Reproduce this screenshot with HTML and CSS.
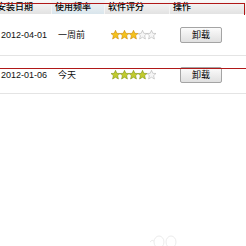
FILE: index.html
```html
<!DOCTYPE html>
<html lang="zh">
<head>
    <meta charset="UTF-8">
    <title>软件管理</title>
    <link rel="stylesheet" href="styles.css">
</head>
<body>
    <div class="page">
        <div class="soft-table">
            <div class="head-row">
                <div class="cell">安装日期</div>
                <div class="cell active">使用频率</div>
                <div class="cell">软件评分</div>
                <div class="cell">操作</div>
            </div>

            <div class="row row-first">
                <div class="cell">2012-04-01</div>
                <div class="cell">一周前</div>
                <div class="cell stars gold">
                    <svg viewBox="0 0 46 10" width="46" height="10">
                        <defs>
                            <polygon id="star" points="4.5,0.3 5.8,3.3 9,3.5 6.6,5.6 7.4,9 4.5,7.2 1.6,9 2.4,5.6 0,3.5 3.2,3.3"/>
                            <clipPath id="half"><rect x="27" y="0" width="4.5" height="10"/></clipPath>
                        </defs>
                        <use href="#star" x="0" class="on"/>
                        <use href="#star" x="9" class="on"/>
                        <use href="#star" x="18" class="on"/>
                        <use href="#star" x="27" class="off"/>
                        <use href="#star" x="27" class="on" clip-path="url(#half)"/>
                        <use href="#star" x="36" class="off"/>
                    </svg>
                </div>
                <div class="cell"><button class="btn">卸载</button></div>
            </div>

            <div class="row row-second">
                <div class="cell">2012-01-06</div>
                <div class="cell">今天</div>
                <div class="cell stars green">
                    <svg viewBox="0 0 46 10" width="46" height="10">
                        <defs>
                            <clipPath id="half2"><rect x="36" y="0" width="4.5" height="10"/></clipPath>
                        </defs>
                        <use href="#star" x="0" class="on"/>
                        <use href="#star" x="9" class="on"/>
                        <use href="#star" x="18" class="on"/>
                        <use href="#star" x="27" class="on"/>
                        <use href="#star" x="36" class="off"/>
                        <use href="#star" x="36" class="on" clip-path="url(#half2)"/>
                    </svg>
                </div>
                <div class="cell"><button class="btn">卸载</button></div>
            </div>
        </div>

        <div class="mark">
            <svg viewBox="0 0 34 14" width="34" height="14">
                <ellipse cx="11" cy="9" rx="5" ry="6"/>
                <ellipse cx="23" cy="9" rx="5" ry="6"/>
                <path d="M2 9 Q4 6 6 8"/>
            </svg>
        </div>

        <!-- red guide lines drawn over the table -->
        <div class="guide guide-top"></div>
        <div class="guide guide-side"></div>
        <div class="guide guide-mid"></div>
    </div>
</body>
</html>
```

FILE: styles.css
```css
*{
    margin:0;
    padding:0;
    box-sizing: border-box;
}
body{
    background:#fff;
    font-family: "Liberation Sans", "Noto Sans CJK SC", sans-serif;
    font-size: 9px;
    color:#111;
}
.page{
    position: relative;
    width:246px;
    height:246px;
    overflow: hidden;
}
.soft-table{
    margin-left:-5px;
    width:260px;
}
.head-row, .row{
    display:grid;
    grid-template-columns: 57px 53px 65px 85px;
    align-items: center;
}
.head-row{
    height:14px;
    background: linear-gradient(#fafafa, #e2e2e2);
}
.head-row .cell{
    height:100%;
    line-height:14px;
    padding-left:3px;
    border-right:1px solid #f4f4f4;
    color:#000;
    font-weight:500;
}
.head-row .cell:first-child{
    padding-left:2px;
}
.head-row .active{
    background: linear-gradient(#f2f6f8, #d9e5ec);
}
.row{
    border-bottom:1px solid #e4e4e4;
}
.row .cell{
    padding-left:6px;
}
.row-first{
    height:42px;
}
.row-second{
    height:38px;
}
.stars{
    display:flex;
    align-items: center;
    padding-top:1px;
}
.stars svg{
    display:block;
}
.gold .on{
    fill:#f5c21a;
    stroke:#c98a10;
    stroke-width:0.6;
}
.green .on{
    fill:#c2cb2c;
    stroke:#7f9418;
    stroke-width:0.6;
}
.off{
    fill:#f6f6f6;
    stroke:#b4b4b4;
    stroke-width:0.6;
}
.btn{
    display:block;
    width:42px;
    height:16px;
    margin-left:4px;
    border:1px solid #a4a4a4;
    border-radius:2px;
    background: linear-gradient(#fbfbfb, #e0e0e0);
    font-family: "Noto Sans CJK SC", sans-serif;
    font-size:9px;
    color:#000;
}
.mark{
    position:absolute;
    left:148px;
    top:233px;
}
.mark svg{
    display:block;
    fill:none;
    stroke:#ececec;
    stroke-width:1;
}
.guide{
    position:absolute;
    background:#b01818;
}
.guide-top{
    left:0;
    top:3px;
    width:245px;
    height:1px;
}
.guide-side{
    left:244px;
    top:3px;
    width:1px;
    height:12px;
}
.guide-mid{
    left:0;
    top:68px;
    width:246px;
    height:1px;
}
```
